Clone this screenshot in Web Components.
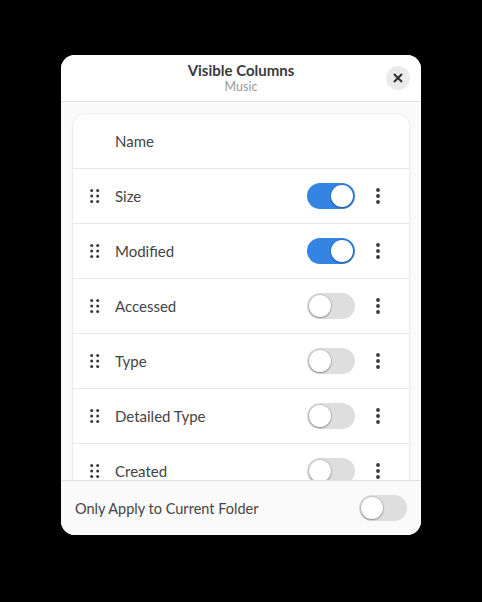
<!DOCTYPE html>
<html>
<head>
<meta charset="utf-8">
<title>Visible Columns</title>
<style>
html, body { margin: 0; height: 100%; background: #000; }
body { font-family: Lato, "Noto Sans", sans-serif; color: #3a3a3c; }
</style>
</head>
<body>
<columns-dialog title-text="Visible Columns" subtitle="Music">
  <column-row name="Name" fixed></column-row>
  <column-row name="Size" on></column-row>
  <column-row name="Modified" on></column-row>
  <column-row name="Accessed"></column-row>
  <column-row name="Type"></column-row>
  <column-row name="Detailed Type"></column-row>
  <column-row name="Created"></column-row>
</columns-dialog>
<script>
class ToggleSwitch extends HTMLElement {
    constructor() {
        super();
        this.attachShadow({ mode: 'open' });
    }

    connectedCallback() {
        this.shadowRoot.innerHTML = `
      <style>
        :host {
          display: flex;
          box-sizing: border-box;
          width: 48px;
          height: 26px;
          padding: 2px;
          border-radius: 13px;
          background: #dedede;
          flex: none;
        }
        :host([on]) {
          background: #3584e4;
          justify-content: flex-end;
        }
        .knob {
          width: 22px;
          height: 22px;
          border-radius: 50%;
          background: #fff;
          box-shadow: 0 0 0 1px rgba(0,0,0,0.1), 0 1px 2px rgba(0,0,0,0.3);
        }
      </style>
      <div class="knob"></div>
    `;
    }
}

class ColumnRow extends HTMLElement {
    constructor() {
        super();
        this.attachShadow({ mode: 'open' });
    }

    connectedCallback() {
        const fixed = this.hasAttribute('fixed');
        const on = this.hasAttribute('on');
        const grip = [[2.7, 2.5], [8.7, 2.5], [2.7, 8], [8.7, 8], [2.7, 13.5], [8.7, 13.5]]
            .map(p => `<circle cx="${p[0]}" cy="${p[1]}" r="1.5"/>`).join('');
        this.shadowRoot.innerHTML = `
      <style>
        :host {
          display: flex;
          align-items: center;
          box-sizing: border-box;
          height: 55px;
          padding: 0 29px 0 16px;
          border-bottom: 1px solid #e8e8e8;
          font-size: 15px;
          color: #444446;
        }
        .grip {
          width: 11px;
          height: 16px;
          margin-right: 15px;
          fill: #38383a;
          flex: none;
        }
        .grip-space { width: 26px; flex: none; }
        .name { flex: 1; }
        .more {
          width: 4px;
          height: 16px;
          margin-left: 21px;
          fill: #38383a;
          flex: none;
        }
      </style>
      ${fixed ? '<div class="grip-space"></div>'
              : `<svg class="grip" viewBox="0 0 11 16">${grip}</svg>`}
      <span class="name">${this.getAttribute('name')}</span>
      ${fixed ? '' : `
        <toggle-switch ${on ? 'on' : ''}></toggle-switch>
        <svg class="more" viewBox="0 0 4 16"><circle cx="2" cy="2" r="1.9"/><circle cx="2" cy="8" r="1.9"/><circle cx="2" cy="14" r="1.9"/></svg>
      `}
    `;
    }
}

class ColumnsDialog extends HTMLElement {
    constructor() {
        super();
        this.attachShadow({ mode: 'open' });
    }

    connectedCallback() {
        this.shadowRoot.innerHTML = `
      <style>
        :host {
          display: flex;
          flex-direction: column;
          box-sizing: border-box;
          width: 360px;
          height: 480px;
          margin: 0 auto;
          position: relative;
          top: 55px;
          border-radius: 14px;
          overflow: hidden;
          background: #fafafa;
        }
        header {
          display: flex;
          align-items: center;
          flex: none;
          height: 47px;
          box-sizing: border-box;
          padding: 0 11px 1px 35px;
          background: #fff;
          border-bottom: 1px solid #e2e2e2;
        }
        .titles {
          flex: 1;
          text-align: center;
        }
        .title {
          font-size: 15px;
          font-weight: 700;
          color: #3a3a3c;
          line-height: 17px;
        }
        .subtitle {
          font-size: 12.5px;
          color: #9a9a9c;
          line-height: 14px;
          margin-top: 1px;
        }
        .close {
          width: 24px;
          height: 24px;
          margin-top: 1px;
          border-radius: 50%;
          background: #ebebeb;
          display: flex;
          align-items: center;
          justify-content: center;
          flex: none;
        }
        .close svg {
          width: 10px;
          height: 10px;
          stroke: #2e2e30;
          stroke-width: 2;
          fill: none;
        }
        .content {
          flex: 1;
          min-height: 0;
          overflow: hidden;
          padding: 12px 12px 0;
        }
        .card {
          background: #fff;
          border-radius: 12px;
          box-shadow: 0 0 0 1px rgba(0,0,0,0.03), 0 1px 3px rgba(0,0,0,0.08);
        }
        footer {
          display: flex;
          align-items: center;
          flex: none;
          height: 55px;
          box-sizing: border-box;
          padding: 0 14px;
          background: #fafafa;
          border-top: 1px solid #e2e2e2;
          font-size: 14.5px;
          color: #444446;
        }
        footer span { flex: 1; }
      </style>
      <header>
        <div class="titles">
          <div class="title">${this.getAttribute('title-text')}</div>
          <div class="subtitle">${this.getAttribute('subtitle')}</div>
        </div>
        <div class="close">
          <svg viewBox="0 0 10 10"><path d="M1 1L9 9M9 1L1 9"/></svg>
        </div>
      </header>
      <div class="content">
        <div class="card"><slot></slot></div>
      </div>
      <footer>
        <span>Only Apply to Current Folder</span>
        <toggle-switch></toggle-switch>
      </footer>
    `;
    }
}

customElements.define('toggle-switch', ToggleSwitch);
customElements.define('column-row', ColumnRow);
customElements.define('columns-dialog', ColumnsDialog);
</script>
</body>
</html>
